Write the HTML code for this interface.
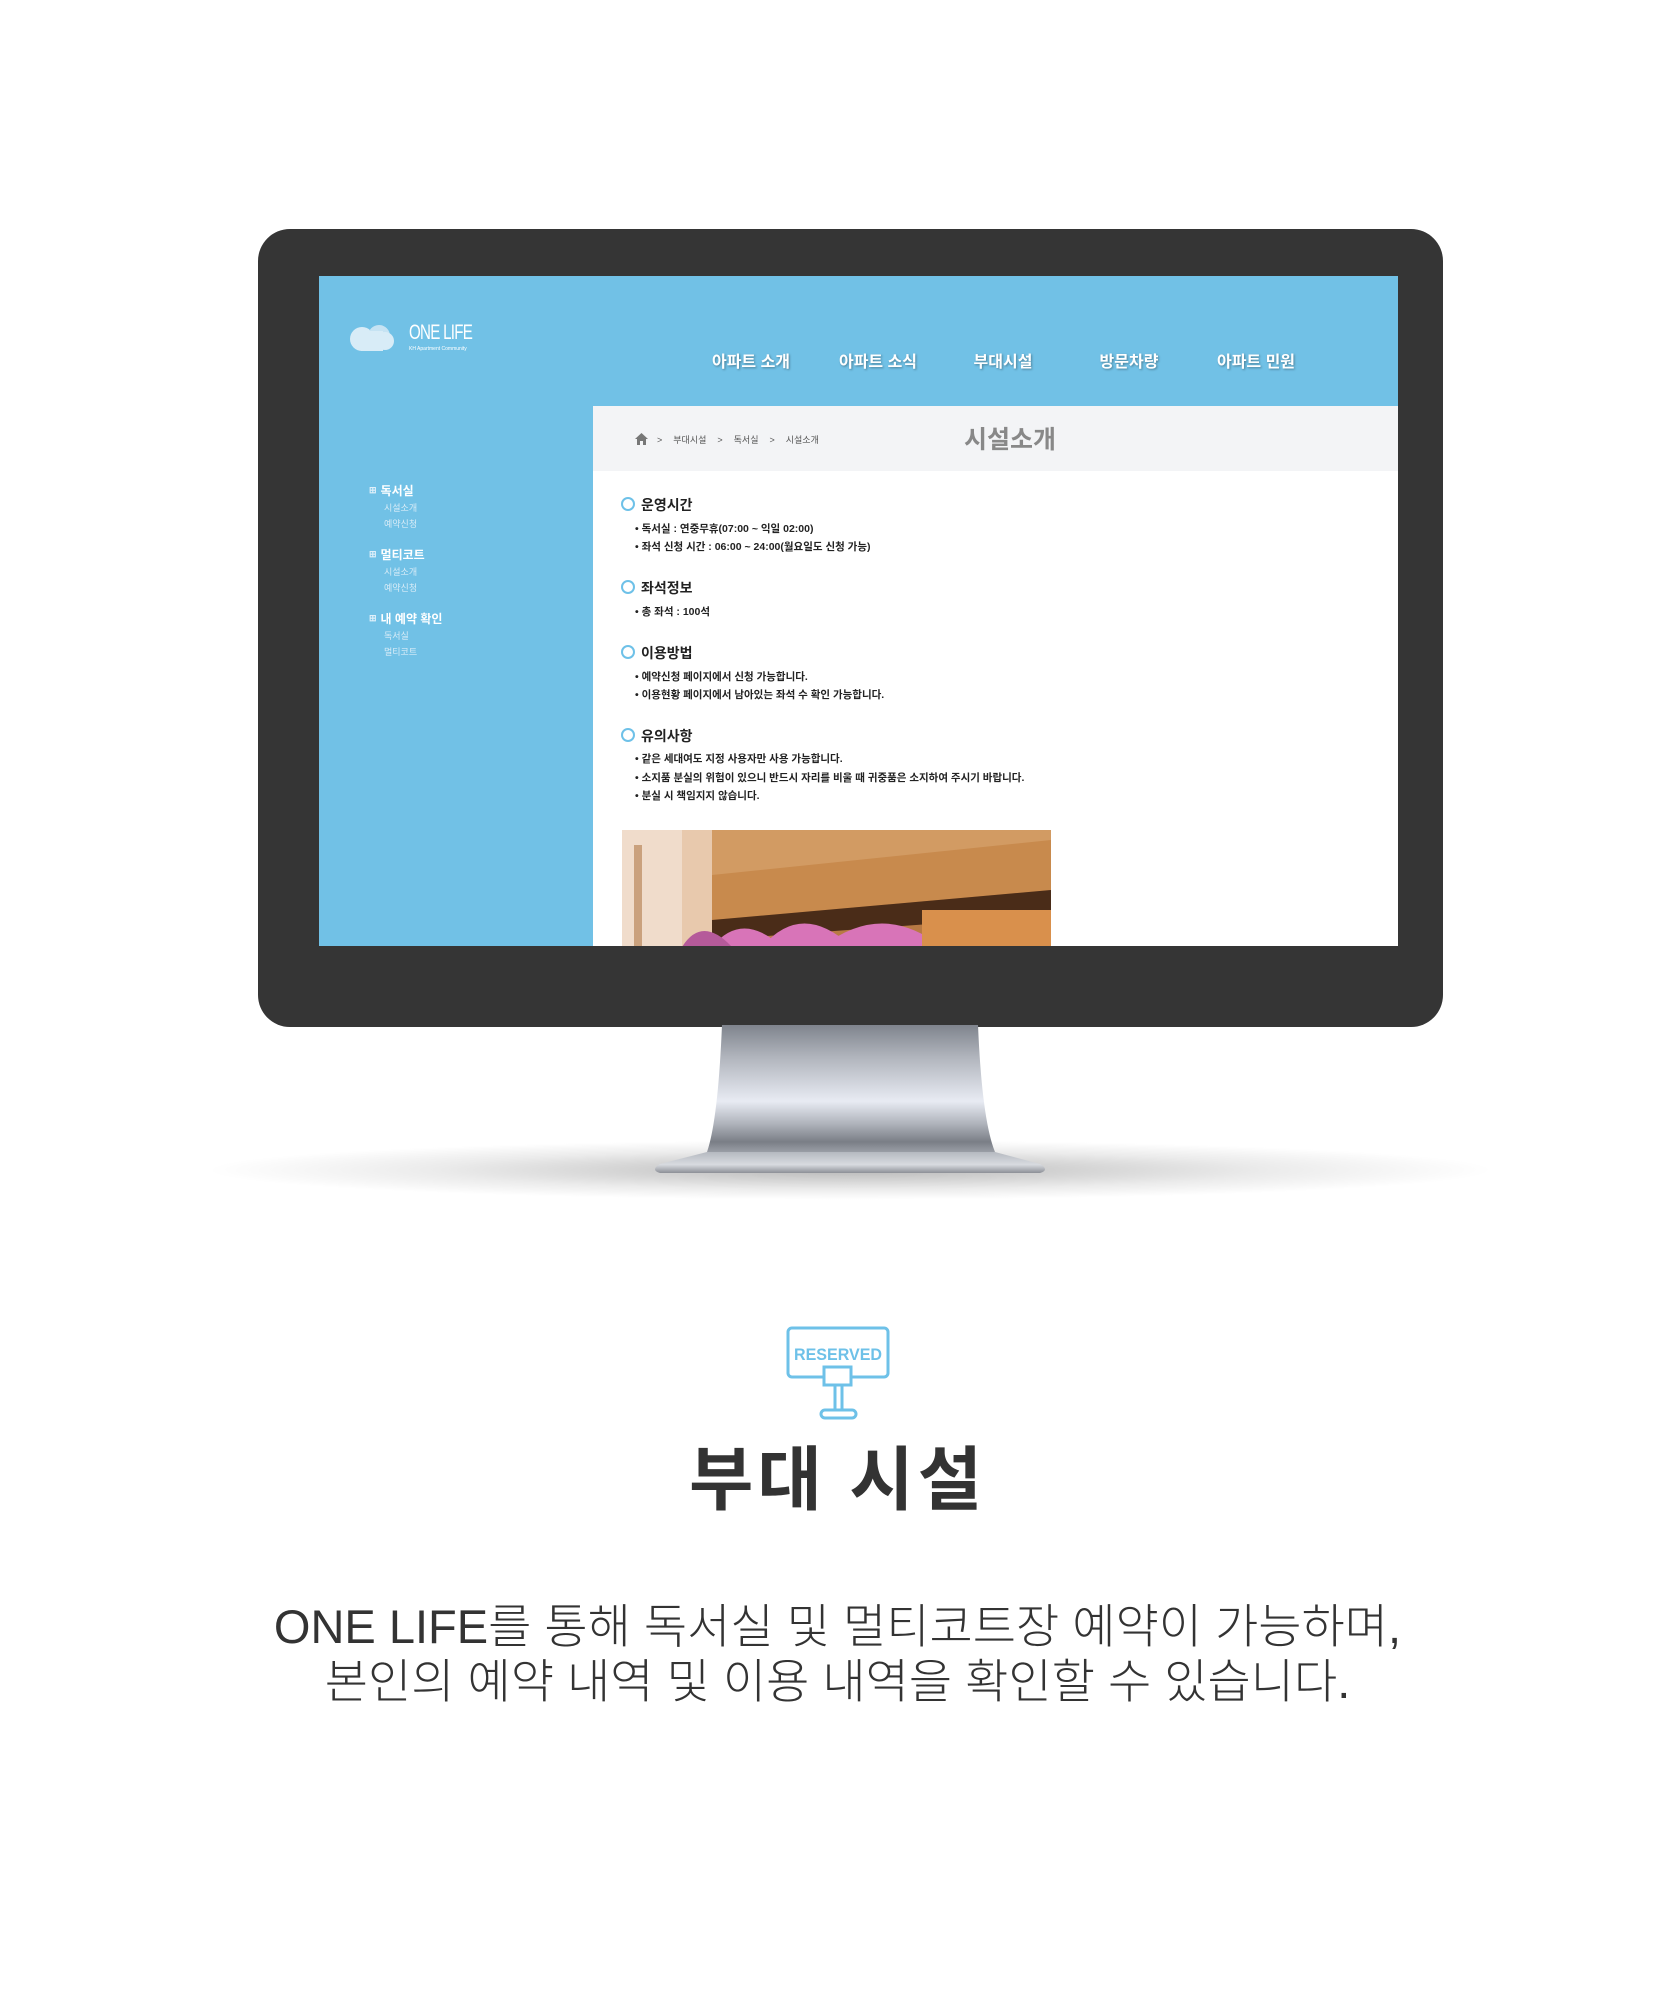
<!DOCTYPE html>
<html><head><meta charset="utf-8"><style>
*{margin:0;padding:0;box-sizing:border-box}
body{width:1675px;height:2000px;background:#fff;position:relative;overflow:hidden;font-family:"Liberation Sans","Noto Sans CJK KR",sans-serif}
.abs{position:absolute}
.bezel{left:258px;top:229px;width:1185px;height:798px;background:#353535;border-radius:32px}
.screen{left:319px;top:276px;width:1079px;height:670px;background:#fff;overflow:hidden}
.hdr{left:0;top:0;width:1084px;height:130px;background:#71c1e6}
.side{left:0;top:130px;width:274px;height:542px;background:#71c1e6}
.nav{top:72px;color:#fff;font-weight:bold;font-size:16px;text-shadow:1px 1px 2px rgba(0,0,0,.35);transform:translateX(-50%);white-space:nowrap}
.bc{left:274px;top:130px;width:810px;height:65px;background:#f3f4f6}
.h{font-size:14px;font-weight:bold;color:#222;white-space:nowrap}
.h:before{content:"";display:inline-block;width:10px;height:10px;border:2px solid #6ec1e8;border-radius:50%;margin-right:6px;vertical-align:-1px}
.it{font-size:10.5px;font-weight:bold;color:#222;white-space:nowrap;left:316px}
.sm{font-size:12px;font-weight:bold;color:#fff;white-space:nowrap}
.sm:before{content:"⊞";font-size:9px;color:#e0f0fa;margin-right:4px;vertical-align:2px}
.ss{font-size:9px;color:#d8ecf7;left:65px}
</style></head><body>
<div class="abs" style="left:200px;top:1140px;width:1300px;height:60px;border-radius:50%;background:radial-gradient(ellipse at center,rgba(0,0,0,.28) 0%,rgba(0,0,0,.08) 45%,rgba(0,0,0,0) 70%)"></div>
<div class="abs bezel"></div>
<svg class="abs" style="left:640px;top:1025px" width="420" height="155" viewBox="640 1025 420 155">
<defs><linearGradient id="g" x1="0" y1="0" x2="0" y2="1">
<stop offset="0" stop-color="#7f848d"/><stop offset=".25" stop-color="#b0b4bc"/><stop offset=".6" stop-color="#e8ebf3"/><stop offset=".78" stop-color="#aeb2ba"/><stop offset=".92" stop-color="#7a7e86"/><stop offset="1" stop-color="#9a9ea6"/></linearGradient>
<linearGradient id="b" x1="0" y1="0" x2="0" y2="1"><stop offset="0" stop-color="#b5b9c0"/><stop offset=".6" stop-color="#d8dbe0"/><stop offset="1" stop-color="#8d9097"/></linearGradient></defs>
<path d="M722 1025 L978 1025 Q982 1120 995 1152 L707 1152 Q718 1120 722 1025Z" fill="url(#g)"/>
<path d="M707 1152 L995 1152 L1040 1164 Q1050 1170 1040 1173 L660 1173 Q650 1170 660 1164Z" fill="url(#b)"/>
</svg>
<div class="abs screen">
 <div class="abs hdr"></div>
 <div class="abs side"></div>
 <svg class="abs" style="left:30px;top:45px" width="60" height="36"><circle cx="13" cy="18" r="12" fill="#d8ecf7"/><circle cx="30" cy="15" r="11" fill="#c6e3f3"/><circle cx="36" cy="20" r="9" fill="#d8ecf7"/><rect x="12" y="10" width="22" height="20" fill="#d8ecf7"/></svg>
 <div class="abs" style="left:90px;top:45px;color:#fff;font-size:21px;transform:scaleX(.72);transform-origin:left;white-space:nowrap;letter-spacing:-1px">ONE LIFE</div>
 <div class="abs" style="left:90px;top:70px;color:#fff;font-size:5px;white-space:nowrap">KH Apartment Community</div>
 <div class="abs nav" style="left:432px">아파트 소개</div>
 <div class="abs nav" style="left:559px">아파트 소식</div>
 <div class="abs nav" style="left:684px">부대시설</div>
 <div class="abs nav" style="left:810px">방문차량</div>
 <div class="abs nav" style="left:937px">아파트 민원</div>
 <div class="abs bc"></div>
 <svg class="abs" style="left:316px;top:157px" width="13" height="12"><path d="M6.5 0 L13 6 L11 6 L11 12 L8 12 L8 8 L5 8 L5 12 L2 12 L2 6 L0 6Z" fill="#777"/></svg>
 <div class="abs" style="left:338px;top:157px;font-size:9px;color:#555;white-space:nowrap;word-spacing:3px">&gt;&nbsp; 부대시설 &nbsp;&gt;&nbsp; 독서실 &nbsp;&gt;&nbsp; 시설소개</div>
 <div class="abs" style="left:691px;top:144px;transform:translateX(-50%);font-size:25px;font-weight:bold;color:#888;white-space:nowrap">시설소개</div>
 <div class="abs sm" style="left:50px;top:206px">독서실</div>
 <div class="abs ss" style="top:225px">시설소개</div><div class="abs ss" style="top:241px">예약신청</div>
 <div class="abs sm" style="left:50px;top:270px">멀티코트</div>
 <div class="abs ss" style="top:289px">시설소개</div><div class="abs ss" style="top:305px">예약신청</div>
 <div class="abs sm" style="left:50px;top:334px">내 예약 확인</div>
 <div class="abs ss" style="top:353px">독서실</div><div class="abs ss" style="top:369px">멀티코트</div>
 <div class="abs h" style="left:302px;top:219px">운영시간</div>
 <div class="abs it" style="top:245px">• 독서실 : 연중무휴(07:00 ~ 익일 02:00)</div>
 <div class="abs it" style="top:263px">• 좌석 신청 시간 : 06:00 ~ 24:00(월요일도 신청 가능)</div>
 <div class="abs h" style="left:302px;top:302px">좌석정보</div>
 <div class="abs it" style="top:328px">• 총 좌석 : 100석</div>
 <div class="abs h" style="left:302px;top:367px">이용방법</div>
 <div class="abs it" style="top:393px">• 예약신청 페이지에서 신청 가능합니다.</div>
 <div class="abs it" style="top:411px">• 이용현황 페이지에서 남아있는 좌석 수 확인 가능합니다.</div>
 <div class="abs h" style="left:302px;top:450px">유의사항</div>
 <div class="abs it" style="top:475px">• 같은 세대여도 지정 사용자만 사용 가능합니다.</div>
 <div class="abs it" style="top:494px">• 소지품 분실의 위험이 있으니 반드시 자리를 비울 때 귀중품은 소지하여 주시기 바랍니다.</div>
 <div class="abs it" style="top:512px">• 분실 시 책임지지 않습니다.</div>
 <svg class="abs" style="left:303px;top:554px" width="429" height="117">
  <rect width="429" height="117" fill="#b87a44"/>
  <rect width="90" height="117" fill="#e8c9ad"/>
  <rect x="0" y="0" width="60" height="117" fill="#f0dccb"/>
  <rect x="12" y="15" width="8" height="102" fill="#caa17d"/>
  <path d="M90 40 L429 0 L429 60 L90 90Z" fill="#c88a4d"/>
  <path d="M90 90 L429 60 L429 85 L90 110Z" fill="#4a2c18"/>
  <path d="M90 0 L429 0 L429 10 L90 45Z" fill="#d29b63"/>
  <path d="M90 117 Q120 80 160 117Z M140 117 Q180 70 230 117Z M200 117 Q260 70 320 117Z" fill="#d874b8"/>
  <path d="M60 117 Q80 85 110 117Z" fill="#b55a9a"/>
  <rect x="300" y="80" width="129" height="37" fill="#d9904c"/>
 </svg>
</div>
<svg class="abs" style="left:784px;top:1324px" width="110" height="100" viewBox="784 1324 110 100" fill="none" stroke="#6ec1e8" stroke-width="3">
 <rect x="788" y="1328" width="100" height="49" rx="4"/>
 <rect x="824" y="1367" width="27" height="18" fill="#fff"/>
 <path d="M835 1385 V1410 M842 1385 V1410"/>
 <rect x="821" y="1410" width="35" height="8" rx="4"/>
 <text x="838" y="1360" text-anchor="middle" fill="#6ec1e8" stroke="none" font-family="Liberation Sans" font-weight="bold" font-size="17" textLength="88" lengthAdjust="spacingAndGlyphs">RESERVED</text>
</svg>
<div class="abs" style="left:0;width:1675px;top:1424px;text-align:center;font-size:70px;font-weight:bold;color:#333;letter-spacing:4px">부대 시설</div>
<div class="abs" style="left:0;width:1675px;top:1599px;text-align:center;font-size:47px;color:#333;line-height:55px;font-weight:300;letter-spacing:0px">ONE LIFE를 통해 독서실 및 멀티코트장 예약이 가능하며,<br>본인의 예약 내역 및 이용 내역을 확인할 수 있습니다.</div>
</body></html>
